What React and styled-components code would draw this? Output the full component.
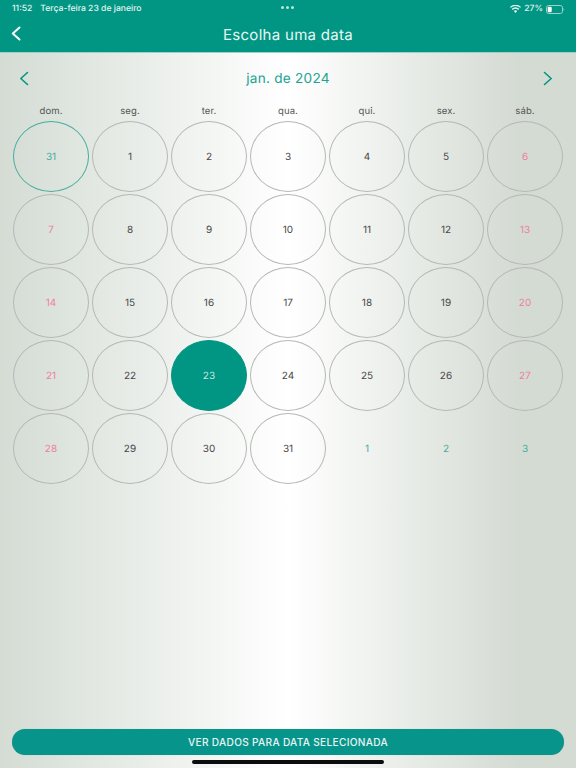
import React from "react";
import styled, { createGlobalStyle } from "styled-components";

const Global = createGlobalStyle`
  html, body { margin: 0; padding: 0; }
  body { font-family: Inter, "Liberation Sans", sans-serif; text-rendering: geometricPrecision; }
`;

const TEAL = "#009683";

const Page = styled.div`
  position: relative;
  width: 576px;
  height: 768px;
  overflow: hidden;
  display: flex;
  flex-direction: column;
  background: linear-gradient(90deg, #d4dcd4 0%, #ffffff 50%, #d4dbd3 90%, #d4dbd3 100%);
`;

const Header = styled.header`
  flex: none;
  height: 53px;
  background: ${TEAL};
  border-bottom: 1px solid #9fd0c7;
  box-sizing: border-box;
  display: flex;
  flex-direction: column;
  color: #fff;
`;

const StatusBar = styled.div`
  height: 16px;
  box-sizing: border-box;
  display: flex;
  align-items: center;
  padding: 2px 11px 0 12px;
  font-size: 8.6px;
  font-weight: 500;
  color: #e4f3f0;
  position: relative;
`;

const StatusTime = styled.span`
  margin-right: 8px;
`;

const Dots = styled.div`
  position: absolute;
  left: 281px;
  top: 6px;
  display: flex;
  gap: 2px;
`;

const Dot = styled.i`
  width: 3px;
  height: 3px;
  border-radius: 50%;
  background: #bfe5de;
`;

const StatusRight = styled.div`
  margin-left: auto;
  display: flex;
  align-items: center;
  gap: 3px;
`;

const TitleBar = styled.div`
  flex: 1;
  position: relative;
  display: flex;
  align-items: center;
  justify-content: center;
  font-size: 15px;
  letter-spacing: 0.3px;
  color: #e9f6f3;
`;

const BackBtn = styled.span`
  position: absolute;
  left: 11px;
  top: 10px;
  display: flex;
`;

const Content = styled.main`
  flex: 1;
  display: flex;
  flex-direction: column;
  padding: 0 13px;
`;

const MonthRow = styled.div`
  height: 52px;
  display: grid;
  grid-template-columns: 1fr auto 1fr;
  align-items: center;
`;

const MonthNav = styled.span`
  display: flex;
  margin: 0 ${(p) => (p.$end ? "10px" : "0")} 2px ${(p) => (p.$end ? "0" : "6px")};
  justify-self: ${(p) => (p.$end ? "end" : "start")};
`;

const MonthLabel = styled.div`
  font-size: 13.6px;
  letter-spacing: 0.25px;
  color: #21a391;
`;

const Grid = styled.div`
  display: grid;
  grid-template-columns: repeat(7, 76px);
  column-gap: 3px;
`;

const WeekDay = styled.div`
  height: 16px;
  box-sizing: border-box;
  padding-bottom: 4px;
  display: flex;
  align-items: center;
  justify-content: center;
  font-size: 9.5px;
  color: #555;
  letter-spacing: 0.1px;
`;

const toneColor = { normal: "#484848", weekend: "#ef7f9f", today: "#45ad9d", selected: "#c4e6df", other: "#45ad9d" };

const Day = styled.div`
  width: 76px;
  height: 71px;
  margin-bottom: 2px;
  box-sizing: border-box;
  border-radius: 50%;
  display: flex;
  align-items: center;
  justify-content: center;
  font-size: 10px;
  color: ${(p) => toneColor[p.$tone]};
  border: 1px solid ${(p) => (p.$tone === "today" ? "#45ad9d" : p.$tone === "other" ? "transparent" : p.$tone === "selected" ? TEAL : "#b5b8b5")};
  background: ${(p) => (p.$tone === "selected" ? TEAL : "transparent")};
`;

const Footer = styled.div`
  margin-top: auto;
  padding: 0 12px 13px;
  position: relative;
`;

const Action = styled.button`
  display: block;
  width: 100%;
  height: 26px;
  margin: 0;
  padding: 0;
  border: 0;
  border-radius: 13px;
  background: #07948a;
  color: #e8f5f3;
  font-family: inherit;
  font-size: 10.15px;
  font-weight: 500;
  letter-spacing: 0.3px;
  box-shadow: 0 0 1px rgba(0, 0, 0, 0.2);
`;

const HomeBar = styled.div`
  position: absolute;
  left: 192px;
  bottom: 4px;
  width: 192px;
  height: 4px;
  border-radius: 2px;
  background: #0c0c0c;
`;

const Chevron = ({ dir, color, sw = 1.6 }) => (
  <svg width="10" height="15" viewBox="0 0 10 15" fill="none">
    <path
      d={dir === "left" ? "M8.5 1.5 L1.8 7.5 L8.5 13.5" : "M1.5 1.5 L8.2 7.5 L1.5 13.5"}
      stroke={color}
      strokeWidth={sw}
      strokeLinecap="round"
      strokeLinejoin="round"
    />
  </svg>
);

const Wifi = () => (
  <svg width="11" height="8" viewBox="0 0 22 16" fill="#e4f3f0">
    <path d="M11 16 L7.6 12.2 A5 5 0 0 1 14.4 12.2 Z" />
    <path d="M5.6 10 L3.4 7.6 A11 11 0 0 1 18.6 7.6 L16.4 10 A8 8 0 0 0 5.6 10 Z" />
    <path d="M1.6 5.6 L0 3.8 A16 16 0 0 1 22 3.8 L20.4 5.6 A13.5 13.5 0 0 0 1.6 5.6 Z" />
  </svg>
);

const Battery = () => (
  <svg width="19" height="9" viewBox="0 0 19 9" fill="none">
    <rect x="0.5" y="0.5" width="16" height="8" rx="2.2" stroke="#9fd3c9" />
    <rect x="1.7" y="1.7" width="4" height="5.6" rx="1" fill="#fff" />
    <path d="M17.6 3 C18.4 3.3 18.4 5.7 17.6 6 Z" fill="#9fd3c9" />
  </svg>
);

const weeks = [
  [31, 1, 2, 3, 4, 5, 6],
  [7, 8, 9, 10, 11, 12, 13],
  [14, 15, 16, 17, 18, 19, 20],
  [21, 22, 23, 24, 25, 26, 27],
  [28, 29, 30, 31, 1, 2, 3],
];

const toneOf = (w, d) => {
  if (w === 0 && d === 0) return "today";
  if (w === 3 && d === 2) return "selected";
  if (w === 4 && d >= 4) return "other";
  if (d === 0 || d === 6) return "weekend";
  return "normal";
};

export default function App() {
  return (
    <Page>
      <Global />
      <Header>
        <StatusBar>
          <StatusTime>11:52</StatusTime>
          <span>Terça-feira 23 de janeiro</span>
          <Dots><Dot /><Dot /><Dot /></Dots>
          <StatusRight>
            <Wifi />
            <span>27%</span>
            <Battery />
          </StatusRight>
        </StatusBar>
        <TitleBar>
          <BackBtn><Chevron dir="left" color="#fff" sw={2} /></BackBtn>
          Escolha uma data
        </TitleBar>
      </Header>
      <Content>
        <MonthRow>
          <MonthNav><Chevron dir="left" color={TEAL} /></MonthNav>
          <MonthLabel>jan. de 2024</MonthLabel>
          <MonthNav $end><Chevron dir="right" color={TEAL} /></MonthNav>
        </MonthRow>
        <Grid>
          {["dom.", "seg.", "ter.", "qua.", "qui.", "sex.", "sáb."].map((d) => (
            <WeekDay key={d}>{d}</WeekDay>
          ))}
          {weeks.map((week, w) =>
            week.map((v, d) => (
              <Day key={`${w}-${d}`} $tone={toneOf(w, d)}>{v}</Day>
            ))
          )}
        </Grid>
      </Content>
      <Footer>
        <Action>VER DADOS PARA DATA SELECIONADA</Action>
        <HomeBar />
      </Footer>
    </Page>
  );
}
